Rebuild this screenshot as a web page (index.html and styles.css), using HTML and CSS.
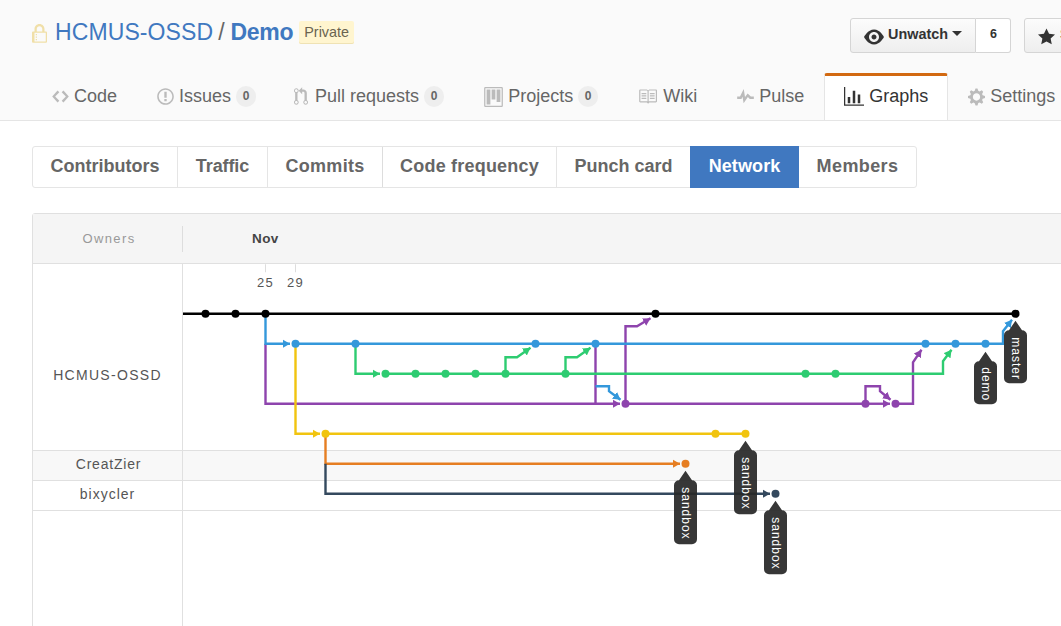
FILE: index.html
```html
<!DOCTYPE html>
<html lang="en">
<head>
<meta charset="utf-8">
<title>Network graph</title>
<link rel="stylesheet" href="styles.css">
</head>
<body>
<header class="repohead">
  <div class="repo-row">
    <h1 class="repo-title">
      <svg class="lock" viewBox="0 0 12 16"><path d="M4 13H3v-1h1v1zm8-6v7c0 .55-.45 1-1 1H1c-.55 0-1-.45-1-1V7c0-.55.45-1 1-1h1V4c0-2.2 1.8-4 4-4s4 1.8 4 4v2h1c.55 0 1 .45 1 1zM3.8 6h4.41V4c0-1.22-.98-2.2-2.2-2.2-1.22 0-2.2.98-2.2 2.2v2H3.8zM11 7H2v7h9V7zM4 8H3v1h1V8zm0 2H3v1h1v-1z"/></svg>
      <a class="owner-link">HCMUS-OSSD</a><span class="slash">/</span><a class="name-link">Demo</a>
      <span class="private">Private</span>
    </h1>
    <div class="actions">
      <div class="btn-group">
        <span class="btn"><svg class="btn-eye" viewBox="0 0 16 16"><path d="M8.06 2C3 2 0 8 0 8s3 6 8.06 6C13 14 16 8 16 8s-3-6-7.94-6zM8 12c-2.2 0-4-1.78-4-4 0-2.2 1.8-4 4-4 2.22 0 4 1.8 4 4 0 2.22-1.78 4-4 4zm2-4c0 1.11-.89 2-2 2-1.11 0-2-.89-2-2 0-1.11.89-2 2-2 1.11 0 2 .89 2 2z"/></svg><span class="btn-label">Unwatch</span><i class="caret"></i></span>
        <span class="social-count">6</span>
      </div>
      <div class="btn-group">
        <span class="btn btn-star"><svg class="btn-staricon" viewBox="0 0 14 16"><path d="M14 6l-4.9-.64L7 1 4.9 5.36 0 6l3.6 3.26L2.67 14 7 11.67 11.33 14l-.93-4.74L14 6z"/></svg><span class="btn-label">Star</span></span>
      </div>
    </div>
  </div>
  <nav class="tabs">
    <a class="tab"><svg class="ico ico-code" viewBox="0 0 14 16"><path d="M9.5 3L8 4.5 11.5 8 8 11.5 9.5 13 14 8 9.5 3zm-5 0L0 8l4.5 5L6 11.5 2.5 8 6 4.5 4.5 3z"/></svg>Code</a>
    <a class="tab"><svg class="ico ico-issue" viewBox="0 0 14 16"><path d="M7 2.3c3.14 0 5.7 2.56 5.7 5.7s-2.56 5.7-5.7 5.7A5.71 5.71 0 0 1 1.3 8c0-3.14 2.56-5.7 5.7-5.7zM7 1C3.14 1 0 4.14 0 8s3.14 7 7 7 7-3.14 7-7-3.14-7-7-7zm1 3H6v5h2V4zm0 6H6v2h2v-2z"/></svg>Issues<span class="counter">0</span></a>
    <a class="tab tab-pull"><svg class="ico ico-pull" viewBox="0 0 12 16"><path d="M11 11.28V5c-.03-.78-.34-1.47-.94-2.06C9.46 2.35 8.78 2.03 8 2H7V0L4 3l3 3V4h1c.27.02.48.11.69.31.21.2.3.42.31.69v6.28A1.993 1.993 0 0 0 10 15a1.993 1.993 0 0 0 1-3.72zm-1 2.92c-.66 0-1.2-.55-1.2-1.2 0-.65.55-1.2 1.2-1.2.65 0 1.2.55 1.2 1.2 0 .65-.55 1.2-1.2 1.2zM4 3c0-1.11-.89-2-2-2a1.993 1.993 0 0 0-1 3.72v6.56A1.993 1.993 0 0 0 2 15a1.993 1.993 0 0 0 1-3.72V4.72c.59-.34 1-.98 1-1.72zm-.8 10c0 .66-.55 1.2-1.2 1.2-.65 0-1.2-.55-1.2-1.2 0-.65.55-1.2 1.2-1.2.65 0 1.2.55 1.2 1.2zM2 4.2C1.34 4.2.8 3.65.8 3c0-.65.55-1.2 1.2-1.2.65 0 1.2.55 1.2 1.2 0 .65-.55 1.2-1.2 1.2z"/></svg>Pull requests<span class="counter">0</span></a>
    <a class="tab"><svg class="ico ico-project" viewBox="0 0 15 16"><path fill-rule="evenodd" d="M10 12h3V2h-3v10zm-4-2h3V2H6v8zm-4 4h3V2H2v12zm-1 1h13V1H1v14zM14 0H1a1 1 0 0 0-1 1v14a1 1 0 0 0 1 1h13a1 1 0 0 0 1-1V1a1 1 0 0 0-1-1z"/></svg>Projects<span class="counter">0</span></a>
    <a class="tab"><svg class="ico ico-book" viewBox="0 0 16 16"><path d="M3 5h4v1H3V5zm0 3h4V7H3v1zm0 2h4V9H3v1zm11-5h-4v1h4V5zm0 2h-4v1h4V7zm0 2h-4v1h4V9zm2-6v9c0 .55-.45 1-1 1H9.5l-1 1-1-1H2c-.55 0-1-.45-1-1V3c0-.55.45-1 1-1h5.5l1 1 1-1H15c.55 0 1 .45 1 1zm-8 .5L7.5 3H2v9h6V3.5zm7-.5H9.5l-.5.5V12h6V3z"/></svg>Wiki</a>
    <a class="tab"><svg class="ico ico-pulse" viewBox="0 0 14 16"><path d="M11.5 8L8.8 5.4 6.6 8.5 5.5 1.6 2.38 8H0v2h3.6l.9-1.8.9 5.4L9 8.5l1.6 1.5H14V8z"/></svg>Pulse</a>
    <a class="tab tab-selected"><svg class="ico ico-graph" viewBox="0 0 16 16"><path d="M16 14v1H0V0h1v14h15zM5 13H3V8h2v5zm4 0H7V3h2v10zm4 0h-2V6h2v7z"/></svg>Graphs</a>
    <a class="tab"><svg class="ico ico-gear" viewBox="0 0 14 16"><path d="M14 8.77v-1.6l-1.94-.64-.45-1.09.88-1.84-1.13-1.13-1.81.91-1.09-.45-.69-1.92h-1.6l-.63 1.94-1.11.45-1.84-.88-1.13 1.13.91 1.81-.45 1.09L0 7.23v1.59l1.94.64.45 1.09-.88 1.84 1.13 1.13 1.81-.91 1.09.45.69 1.92h1.59l.63-1.94 1.11-.45 1.84.88 1.13-1.13-.92-1.81.47-1.09L14 8.75v.02zM7 11c-1.66 0-3-1.34-3-3s1.34-3 3-3 3 1.34 3 3-1.34 3-3 3z"/></svg>Settings</a>
  </nav>
</header>

<main class="main">
  <nav class="subnav">
    <a class="subnav-item sn-contributors">Contributors</a>
    <a class="subnav-item sn-traffic">Traffic</a>
    <a class="subnav-item sn-commits">Commits</a>
    <a class="subnav-item sn-code">Code frequency</a>
    <a class="subnav-item sn-punch">Punch card</a>
    <a class="subnav-item sn-network">Network</a>
    <a class="subnav-item sn-members">Members</a>
  </nav>

  <section class="network">
    <div class="network-head">
      <div class="owners-title"><span class="owners-label">Owners</span></div>
      <div class="month">Nov</div>
    </div>
    <div class="network-body">
      <div class="owner-row owner-row-main"><div class="owner-name">HCMUS-OSSD</div></div>
      <div class="owner-row owner-row-alt"><div class="owner-name">CreatZier</div></div>
      <div class="owner-row"><div class="owner-name">bixycler</div></div>
      <div class="owner-row owner-row-rest"><div class="owner-name"></div></div>

      <svg class="graph" viewBox="33 263.75 1028 362">
        <defs>
          <marker id="a-blue" class="arrow-blue" markerUnits="userSpaceOnUse" markerWidth="8" markerHeight="9" refX="7.5" refY="4.5" orient="auto"><path d="M0 .25L7.5 4.5L0 8.75z"/></marker>
          <marker id="a-green" class="arrow-green" markerUnits="userSpaceOnUse" markerWidth="8" markerHeight="9" refX="7.5" refY="4.5" orient="auto"><path d="M0 .25L7.5 4.5L0 8.75z"/></marker>
          <marker id="a-purple" class="arrow-purple" markerUnits="userSpaceOnUse" markerWidth="8" markerHeight="9" refX="7.5" refY="4.5" orient="auto"><path d="M0 .25L7.5 4.5L0 8.75z"/></marker>
          <marker id="a-yellow" class="arrow-yellow" markerUnits="userSpaceOnUse" markerWidth="8" markerHeight="9" refX="7.5" refY="4.5" orient="auto"><path d="M0 .25L7.5 4.5L0 8.75z"/></marker>
          <marker id="a-orange" class="arrow-orange" markerUnits="userSpaceOnUse" markerWidth="8" markerHeight="9" refX="7.5" refY="4.5" orient="auto"><path d="M0 .25L7.5 4.5L0 8.75z"/></marker>
          <marker id="a-navy" class="arrow-navy" markerUnits="userSpaceOnUse" markerWidth="8" markerHeight="9" refX="7.5" refY="4.5" orient="auto"><path d="M0 .25L7.5 4.5L0 8.75z"/></marker>
        </defs>

        <path class="tick" d="M265.5 264V272M295.5 264V272"/>
        <text class="day" x="265.5" y="287">25</text>
        <text class="day" x="295.5" y="287">29</text>

        <g class="line purple">
          <path d="M265.5 343.5V403.5H595.5" />
          <path marker-end="url(#a-purple)" d="M595.5 343.5V403.5H620"/>
          <path d="M625.5 403.5H865.5"/>
          <path marker-end="url(#a-purple)" d="M625.5 403.5V326H637L650.5 318"/>
          <path marker-end="url(#a-purple)" d="M865.5 403.5H890"/>
          <path marker-end="url(#a-purple)" d="M865.5 403.5V386H880V391L890.5 399.5"/>
          <path marker-end="url(#a-purple)" d="M895.5 403.5H913V362L921.5 349.5"/>
        </g>
        <g class="line yellow">
          <path marker-end="url(#a-yellow)" d="M295.5 343.5V433.5H320"/>
          <path d="M325.5 433.5H745.5"/>
        </g>
        <g class="line orange">
          <path marker-end="url(#a-orange)" d="M325.5 433.5V463.5H680"/>
        </g>
        <g class="line navy">
          <path marker-end="url(#a-navy)" d="M325.5 463.5V493.5H770"/>
        </g>
        <g class="line green">
          <path marker-end="url(#a-green)" d="M355.5 343.5V373.5H380"/>
          <path marker-end="url(#a-green)" d="M385.5 373.5H943V361L951.5 349.5"/>
          <path marker-end="url(#a-green)" d="M505.5 373.5V357H517L530.5 347.5"/>
          <path marker-end="url(#a-green)" d="M565.5 373.5V357H577L590.5 347.5"/>
        </g>
        <g class="line blue">
          <path marker-end="url(#a-blue)" d="M265.5 313.5V343.5H290"/>
          <path marker-end="url(#a-blue)" d="M295.5 343.5H1003V331L1012 319.5"/>
          <path marker-end="url(#a-blue)" d="M595.5 386H609V391L620.5 399.5"/>
        </g>
        <path class="line black" d="M183 313.5H1015.5"/>

        <g class="dots dot-black">
          <circle cx="205.5" cy="313.5" r="4"/><circle cx="235.5" cy="313.5" r="4"/><circle cx="265.5" cy="313.5" r="4"/><circle cx="655.5" cy="313.5" r="4"/><circle cx="1015.5" cy="313.5" r="4"/>
        </g>
        <g class="dots dot-blue">
          <circle cx="295.5" cy="343.5" r="4"/><circle cx="355.5" cy="343.5" r="4"/><circle cx="535.5" cy="343.5" r="4"/><circle cx="595.5" cy="343.5" r="4"/><circle cx="925.5" cy="343.5" r="4"/><circle cx="955.5" cy="343.5" r="4"/><circle cx="985.5" cy="343.5" r="4"/>
        </g>
        <g class="dots dot-green">
          <circle cx="385.5" cy="373.5" r="4"/><circle cx="415.5" cy="373.5" r="4"/><circle cx="445.5" cy="373.5" r="4"/><circle cx="475.5" cy="373.5" r="4"/><circle cx="505.5" cy="373.5" r="4"/><circle cx="565.5" cy="373.5" r="4"/><circle cx="805.5" cy="373.5" r="4"/><circle cx="835.5" cy="373.5" r="4"/>
        </g>
        <g class="dots dot-purple">
          <circle cx="625.5" cy="403.5" r="4"/><circle cx="865.5" cy="403.5" r="4"/><circle cx="895.5" cy="403.5" r="4"/>
        </g>
        <g class="dots dot-yellow">
          <circle cx="325.5" cy="433.5" r="4"/><circle cx="715.5" cy="433.5" r="4"/><circle cx="745.5" cy="433.5" r="4"/>
        </g>
        <circle class="dots dot-orange" cx="685.5" cy="463.5" r="4"/>
        <circle class="dots dot-navy" cx="775.5" cy="493.5" r="4"/>

        <g class="tag">
          <path d="M985.5 351.5L992 361H992a5 5 0 0 1 5 5V399a5 5 0 0 1-5 5H979a5 5 0 0 1-5-5V366a5 5 0 0 1 5-5H979z"/>
          <text transform="translate(985.5 367) rotate(90)">demo</text>
        </g>
        <g class="tag">
          <path d="M1015.5 320.5L1022 330H1022a5 5 0 0 1 5 5V378a5 5 0 0 1-5 5H1009a5 5 0 0 1-5-5V335a5 5 0 0 1 5-5H1009z"/>
          <text transform="translate(1015.5 337) rotate(90)">master</text>
        </g>
        <g class="tag">
          <path d="M685.5 470.5L692 480H692a5 5 0 0 1 5 5V539a5 5 0 0 1-5 5H679a5 5 0 0 1-5-5V485a5 5 0 0 1 5-5H679z"/>
          <text transform="translate(685.5 487) rotate(90)">sandbox</text>
        </g>
        <g class="tag">
          <path d="M745.5 440.5L752 450H752a5 5 0 0 1 5 5V509a5 5 0 0 1-5 5H739a5 5 0 0 1-5-5V455a5 5 0 0 1 5-5H739z"/>
          <text transform="translate(745.5 457) rotate(90)">sandbox</text>
        </g>
        <g class="tag">
          <path d="M775.5 500.5L782 510H782a5 5 0 0 1 5 5V569a5 5 0 0 1-5 5H769a5 5 0 0 1-5-5V515a5 5 0 0 1 5-5H769z"/>
          <text transform="translate(775.5 517) rotate(90)">sandbox</text>
        </g>
      </svg>
    </div>
  </section>
</main>
</body>
</html>
```

FILE: styles.css
```css
* { box-sizing: border-box; }
html, body { margin: 0; padding: 0; height: 626px; overflow: hidden; background: #fff; }
body { font-family: "Liberation Sans", Arial, sans-serif; color: #333; width: 1061px; }

/* Repo header */
.repohead { background: #fafafa; border-bottom: 1px solid #e5e5e5; height: 121px; overflow: hidden; }
.repo-row { height: 73px; padding: 18px 0 0 32px; display: flex; align-items: flex-start; }
.repo-title { margin: 0; display: flex; align-items: center; font-size: 23px; font-weight: normal; height: 28px; line-height: 28px; }
.lock { width: 15px; height: 20px; margin: 3px 8px 0 0; fill: #f0dfa8; flex: none; }
.owner-link { color: #4078c0; letter-spacing: .1px; }
.slash { color: #666; margin: 0 6px 0 5px; }
.name-link { color: #4078c0; font-weight: bold; letter-spacing: -.3px; }
.private { margin-left: 6px; height: 23px; padding: 0 5px; line-height: 22px; font-size: 14.4px; color: #6a6450; background: #fff5cf; border-radius: 2px; box-shadow: inset 0 -1px 0 #efe2b4; }

.actions { margin-left: auto; margin-right: -40px; display: flex; gap: 13px; }
.btn-group { display: flex; height: 35px; }
.btn { display: flex; align-items: center; padding: 0 13px 0 13px; border: 1px solid #d5d5d5; border-radius: 3px 0 0 3px; background: linear-gradient(#fcfcfc, #eeeeee); font-size: 14.4px; font-weight: bold; color: #333; width: 126px; }
.btn-label { margin-top: -3px; }
.btn-eye { width: 20px; height: 20px; margin: 3px 4px 0 0; fill: #333; flex: none; }
.caret { margin: -4px 0 0 4px; width: 0; height: 0; border-style: solid; border-width: 5px 5px 0; border-color: #333 transparent transparent; }
.social-count { width: 35px; padding: 0 0 3px 1px; border: 1px solid #d5d5d5; border-left: 0; border-radius: 0 3px 3px 0; background: #fff; display: flex; align-items: center; justify-content: center; font-size: 12.5px; font-weight: bold; color: #333; }
.btn-star { width: 77px; border-radius: 3px; }
.btn-staricon { width: 17px; height: 20px; margin: 3px 5px 0 0; fill: #333; flex: none; }

/* Tabs */
.tabs { display: flex; padding-left: 32px; height: 48px; }
.tab { display: flex; align-items: center; height: 48px; padding: 0 19px 4px; border: solid transparent; border-width: 3px 1px 0; font-size: 18px; color: #666; white-space: nowrap; }
.tab-pull { margin-left: -2px; }
.tab-selected { background: #fff; color: #333; border-color: #d26911 #e5e5e5 transparent; border-radius: 3px 3px 0 0; }
.ico { fill: #bbb; height: 19px; flex: none; margin-right: 5px; }
.ico-code { width: 17px; }
.ico-issue { width: 17px; }
.ico-pull { width: 14px; margin-right: 7px; }
.ico-project { width: 19px; height: 20px; }
.ico-book { width: 19px; margin-right: 6px; }
.ico-pulse { width: 17px; margin-right: 5px; }
.ico-graph { width: 20px; height: 20px; fill: #333; }
.ico-gear { width: 17px; height: 20px; }
.counter { display: inline-block; margin-left: 5px; min-width: 20px; height: 21px; padding: 0 6px; border-radius: 20px; background: #eee; font-size: 12px; font-weight: bold; line-height: 21px; text-align: center; color: #666; }

/* Sub navigation */
.main { padding: 25px 0 0 32px; }
.subnav { display: inline-flex; height: 42px; border: 1px solid #e5e5e5; border-radius: 3px; }
.subnav-item { display: flex; align-items: center; justify-content: center; padding-bottom: 2px; border-right: 1px solid #e5e5e5; font-size: 18px; font-weight: bold; color: #666; white-space: nowrap; }
.sn-contributors { width: 145px; }
.sn-traffic { width: 90px; letter-spacing: -.1px; }
.sn-commits { width: 115px; letter-spacing: .3px; border-right-color: #ddd; }
.sn-code { width: 174px; letter-spacing: .2px; }
.sn-punch { width: 133px; border-right: 0; }
.sn-network { width: 109px; margin: -1px 0; background: #4078c0; color: #fff; border-right: 0; letter-spacing: .1px; }
.sn-members { width: 117px; border-right: 0; letter-spacing: .4px; }

/* Network panel */
.network { margin-top: 25px; width: 1100px; height: 420px; border: 1px solid #e0e0e0; border-radius: 3px 0 0 0; }
.network-head { display: flex; align-items: center; height: 50px; background: #f5f5f5; border-bottom: 1px solid #e0e0e0; }
.owners-title { width: 150px; height: 26px; border-right: 1px solid #ddd; display: flex; align-items: center; justify-content: center; flex: none; }
.owners-label { font-size: 13px; letter-spacing: 1.4px; color: #999; margin: -1px 0 0 3px; }
.month { margin-left: 69px; font-size: 13.5px; font-weight: bold; color: #444; letter-spacing: .4px; }
.network-body { position: relative; }
.owner-row { display: flex; height: 30px; border-bottom: 1px solid #e0e0e0; }
.owner-row-main { height: 187px; }
.owner-row-alt { background: #f8f8f8; }
.owner-row-rest { height: 200px; border-bottom: 0; }
.owner-name { width: 150px; padding-bottom: 3px; flex: none; border-right: 1px solid #e0e0e0; display: flex; align-items: center; justify-content: center; font-size: 14px; letter-spacing: 1px; color: #555; }
.owner-row-main .owner-name { padding: 35px 0 0; letter-spacing: 1.3px; }
.owner-row-alt .owner-name { padding-left: 2px; letter-spacing: .8px; }
.graph { position: absolute; left: 0; top: 0; width: 1028px; height: 362px; font-family: "Liberation Sans", Arial, sans-serif; }

.tick { stroke: #ddd; stroke-width: 1; fill: none; }
.day { font-size: 13px; letter-spacing: 1.2px; fill: #555; text-anchor: middle; }
.line { fill: none; stroke-width: 2.4; }
.line path { fill: none; }
.black { stroke: #000; }
.blue { stroke: #3498db; }
.green { stroke: #2ecc71; }
.purple { stroke: #8e44ad; }
.yellow { stroke: #f1c40f; }
.orange { stroke: #e67e22; }
.navy { stroke: #34495e; }
.arrow-blue { fill: #3498db; }
.arrow-green { fill: #2ecc71; }
.arrow-purple { fill: #8e44ad; }
.arrow-yellow { fill: #f1c40f; }
.arrow-orange { fill: #e67e22; }
.arrow-navy { fill: #34495e; }
.dot-black { fill: #000; }
.dot-blue { fill: #3498db; }
.dot-green { fill: #2ecc71; }
.dot-purple { fill: #8e44ad; }
.dot-yellow { fill: #f1c40f; }
.dot-orange { fill: #e67e22; }
.dot-navy { fill: #34495e; }
.tag path { fill: rgba(40, 40, 40, .93); }
.tag text { fill: #fff; font-size: 12px; letter-spacing: 1px; dominant-baseline: central; }
```
